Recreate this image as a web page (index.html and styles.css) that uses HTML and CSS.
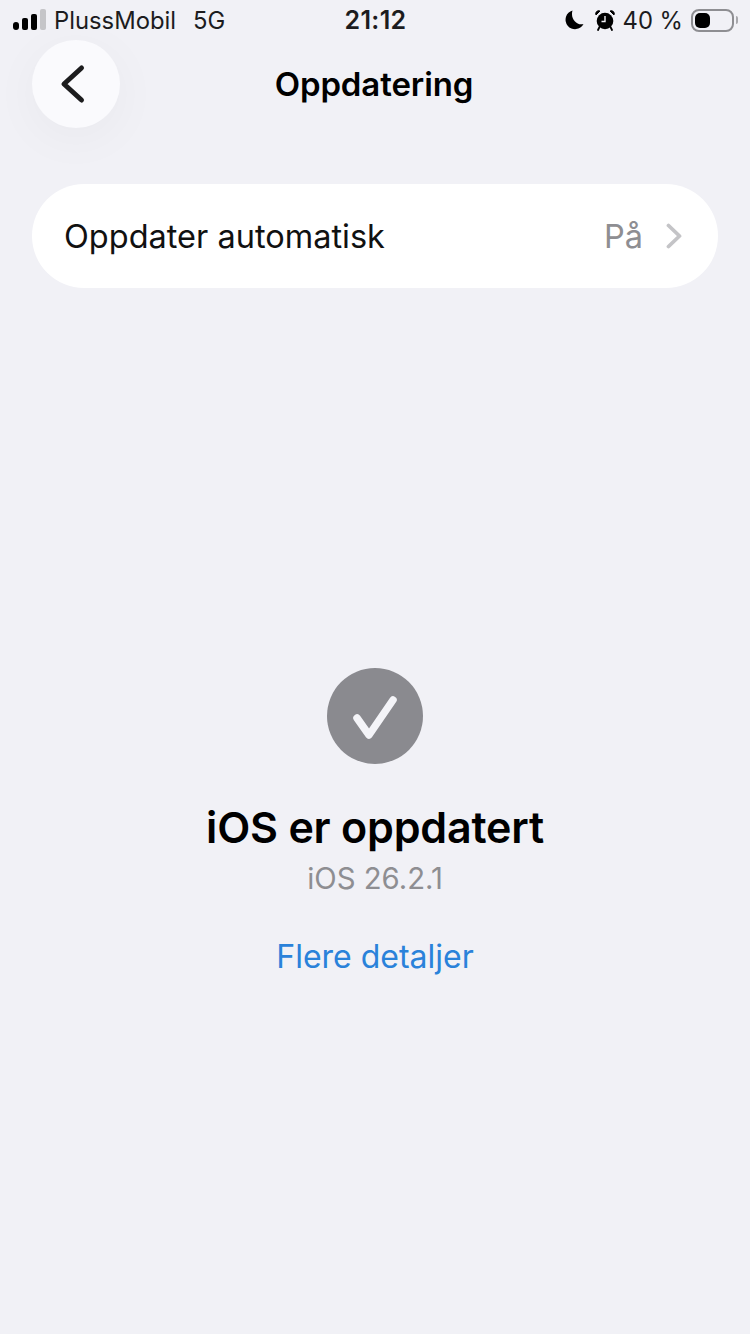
FILE: index.html
```html
<!DOCTYPE html>
<html lang="nb">
<head>
  <meta charset="UTF-8" />
  <meta name="viewport" content="width=device-width, initial-scale=1.0" />
  <title>Oppdatering</title>
  <link rel="stylesheet" href="styles.css">
</head>
<body>
  <div class="statusbar">
    <div class="status-left">
      <div class="signal">
        <span class="bar bar1"></span>
        <span class="bar bar2"></span>
        <span class="bar bar3"></span>
        <span class="bar bar4"></span>
      </div>
      <span class="carrier">PlussMobil</span>
      <span class="network">5G</span>
    </div>
    <div class="clock">21:12</div>
    <div class="status-right">
      <svg class="moon" width="19" height="20" viewBox="0 0 19 20"><path d="M7.500.5A9.500 9.500 0 1 0 18.500 14C12 16 5 9 7.500.5Z" fill="#000"/></svg>
      <svg class="alarm" width="20" height="22" viewBox="0 0 20 22">
        <circle cx="10" cy="12" r="8.300" fill="#000"/>
        <path d="M1 6 5 2A3 3 0 0 0 1 6ZM19 6 15 2A3 3 0 0 1 19 6Z" fill="#000" stroke="#000"/>
        <path d="M10 7v5.500H6.500" fill="none" stroke="#f1f1f6" stroke-width="1.400"/>
        <path d="M4.500 18 3 21M15.500 18l1.500 3" stroke="#000" stroke-width="1.800" stroke-linecap="round"/>
      </svg>
      <span class="percent">40 %</span>
      <div class="battery"><span class="battery-level"></span></div>
      <span class="battery-cap"></span>
    </div>
  </div>

  <div class="navbar">
    <button class="back">
      <svg width="28" height="40" viewBox="0 0 28 40"><path d="M22.500 4 5 20l17.500 16" fill="none" stroke="#1c1c1e" stroke-width="5" stroke-linecap="round" stroke-linejoin="round"/></svg>
    </button>
    <h1 class="title">Oppdatering</h1>
  </div>

  <div class="card">
    <span class="card-label">Oppdater automatisk</span>
    <span class="card-value">På</span>
    <svg class="chevron" width="16" height="26" viewBox="0 0 16 26"><path d="M2.500 2.500 13.500 13 2.500 23.500" fill="none" stroke="#c4c4c7" stroke-width="3.800" stroke-linecap="round" stroke-linejoin="round"/></svg>
  </div>

  <div class="result">
    <div class="check">
      <svg width="56" height="56" viewBox="0 0 56 56"><path d="M10 30 22 47 46 12" fill="none" stroke="#f4f4f8" stroke-width="7.500" stroke-linecap="round" stroke-linejoin="round"/></svg>
    </div>
    <h2 class="result-title">iOS er oppdatert</h2>
    <div class="result-version">iOS 26.2.1</div>
    <a class="result-link" href="#">Flere detaljer</a>
  </div>
</body>
</html>
```

FILE: styles.css
```css
body {
  margin: 0;
  height: 1334px;
  overflow: hidden;
  background: #f1f1f6;
  color: #000;
  font-family: Inter, "Liberation Sans", sans-serif;
}

/* status bar */
.statusbar {
  height: 40px;
  padding: 0 12px 0 13px;
  display: grid;
  grid-template-columns: 1fr auto 1fr;
  align-items: center;
  font-size: 23.8px;
  color: #1c1c1e;
}

.status-left, .status-right {
  display: flex;
  align-items: center;
}

.status-right {
  justify-content: flex-end;
}

.signal {
  display: flex;
  align-items: flex-end;
  gap: 3px;
  height: 21px;
  margin-top: -1px;
}

.bar {
  width: 6px;
  background: #000;
  border-radius: 2px;
}

.bar1 { height: 8px; border-radius: 3px; }
.bar2 { height: 12px; }
.bar3 { height: 16px; }
.bar4 { height: 21px; background: #c5c5c8; }

.carrier { margin-left: 8px; }
.network { margin-left: 17px; }

.clock {
  font-size: 25px;
  font-weight: 600;
  letter-spacing: 0.3px;
}

.moon { margin-right: 11px; }
.alarm { margin-right: 8px; }

.battery {
  width: 43px;
  height: 23px;
  margin-left: 8px;
  padding: 2px;
  box-sizing: border-box;
  border: 2px solid #8e8e92;
  border-radius: 8px;
}

.battery-level {
  display: block;
  width: 15px;
  height: 15px;
  background: #000;
  border-radius: 5px;
}

.battery-cap {
  width: 2px;
  height: 8px;
  margin-left: 2px;
  background: #a8a8ac;
  border-radius: 0 2px 2px 0;
}

/* nav */
.navbar {
  height: 88px;
  padding: 0 32px;
  display: flex;
  align-items: center;
  justify-content: center;
  position: relative;
}

.back {
  position: absolute;
  left: 32px;
  top: 0;
  width: 88px;
  height: 88px;
  padding: 0;
  border: 0;
  border-radius: 50%;
  background: #fafafd;
  box-shadow: 0 10px 50px rgba(0, 0, 0, 0.04);
  display: flex;
  align-items: center;
  justify-content: center;
}

.back svg { margin-right: 6px; }

.title {
  margin: 0 2px 0 0;
  font-size: 33px;
  font-weight: 600;
  letter-spacing: -0.1px;
}

/* settings row */
.card {
  height: 104px;
  margin: 56px 32px 0;
  padding: 0 36px 0 32px;
  background: #fff;
  border-radius: 52px;
  display: flex;
  align-items: center;
  font-size: 32.5px;
}

.card-label {
  flex: 1;
  color: #111;
}

.card-value {
  color: #8e8e92;
}

.chevron { margin-left: 23px; }

/* up to date block */
.result {
  margin-top: 380px;
  display: flex;
  flex-direction: column;
  align-items: center;
}

.check {
  width: 96px;
  height: 96px;
  border-radius: 50%;
  background: #8a8a8f;
  display: flex;
  align-items: center;
  justify-content: center;
}

.result-title {
  margin: 39px 0 0;
  font-size: 43px;
  line-height: 48px;
  font-weight: 600;
  letter-spacing: -0.2px;
}

.result-version {
  margin-top: 11px;
  font-size: 29.3px;
  line-height: 34px;
  color: #8e8e92;
}

.result-link {
  margin-top: 41px;
  font-size: 32px;
  line-height: 40px;
  color: #2a82da;
  text-decoration: none;
}
```
